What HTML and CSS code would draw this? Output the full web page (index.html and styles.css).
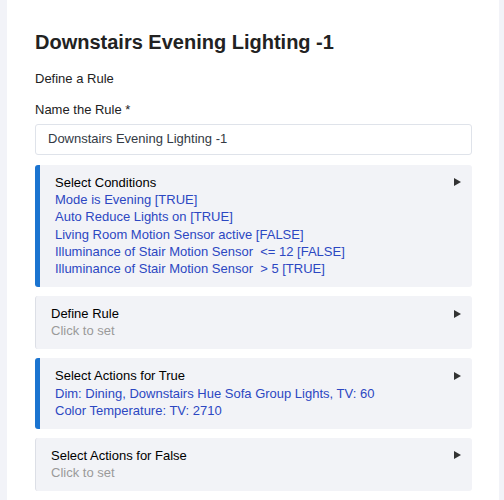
FILE: index.html
```html
<!DOCTYPE html>
<html>
<head>
<meta charset="utf-8">
<link rel="stylesheet" href="styles.css">
</head>
<body>
<div class="card">
  <h1 class="title">Downstairs Evening Lighting -1</h1>
  <p class="subtitle">Define a Rule</p>
  <label class="label">Name the Rule *</label>
  <div class="input">Downstairs Evening Lighting -1</div>

  <div class="panel active">
    <div class="panel-head"><span>Select Conditions</span><span class="arrow"></span></div>
    <div class="link">Mode is Evening [TRUE]</div>
    <div class="link">Auto Reduce Lights on [TRUE]</div>
    <div class="link">Living Room Motion Sensor active [FALSE]</div>
    <div class="link">Illuminance of Stair Motion Sensor &nbsp;&lt;= 12 [FALSE]</div>
    <div class="link">Illuminance of Stair Motion Sensor &nbsp;&gt; 5 [TRUE]</div>
  </div>

  <div class="panel">
    <div class="panel-head"><span>Define Rule</span><span class="arrow"></span></div>
    <div class="hint">Click to set</div>
  </div>

  <div class="panel active">
    <div class="panel-head"><span>Select Actions for True</span><span class="arrow"></span></div>
    <div class="link">Dim: Dining, Downstairs Hue Sofa Group Lights, TV: 60</div>
    <div class="link">Color Temperature: TV: 2710</div>
  </div>

  <div class="panel">
    <div class="panel-head"><span>Select Actions for False</span><span class="arrow"></span></div>
    <div class="hint">Click to set</div>
  </div>
</div>
</body>
</html>
```

FILE: styles.css
```css
html, body {
  margin: 0;
  padding: 0;
}
body {
  background: #f2f3f8;
  font-family: "Liberation Sans", Arial, sans-serif;
  font-size: 13px;
  line-height: 17.33px;
  color: #111;
}
.card {
  background: #ffffff;
  margin: 0 5px 0 7px;
  padding: 30px 27px 20px 28px;
  min-height: 500px;
  box-sizing: border-box;
}
.title {
  margin: 0;
  font-size: 20px;
  line-height: 24px;
  font-weight: bold;
  color: #222;
}
.subtitle {
  margin: 15.5px 0 0;
  color: #222;
}
.label {
  display: block;
  margin-top: 14.5px;
  color: #222;
}
.input {
  margin-top: 5px;
  height: 31px;
  box-sizing: border-box;
  border: 1px solid #dfe3ea;
  border-radius: 3px;
  padding: 0 12px;
  display: flex;
  align-items: center;
  color: #333a44;
}
.panel {
  margin-top: 10px;
  background: #f2f3f7;
  border-left: 1px solid #dcdfe6;
  border-radius: 3px;
  padding: 9px 11px 9.5px 15px;
}
.panel + .panel {
  margin-top: 9px;
}
.panel.active {
  border-left: 5px solid #1b74d0;
}
.panel-head {
  display: flex;
  justify-content: space-between;
  align-items: center;
  color: #000;
}
.arrow {
  width: 0;
  height: 0;
  border-top: 4px solid transparent;
  border-bottom: 4px solid transparent;
  border-left: 7px solid #333;
}
.link {
  color: #2c47c2;
}
.hint {
  color: #9a9a9a;
}
```
